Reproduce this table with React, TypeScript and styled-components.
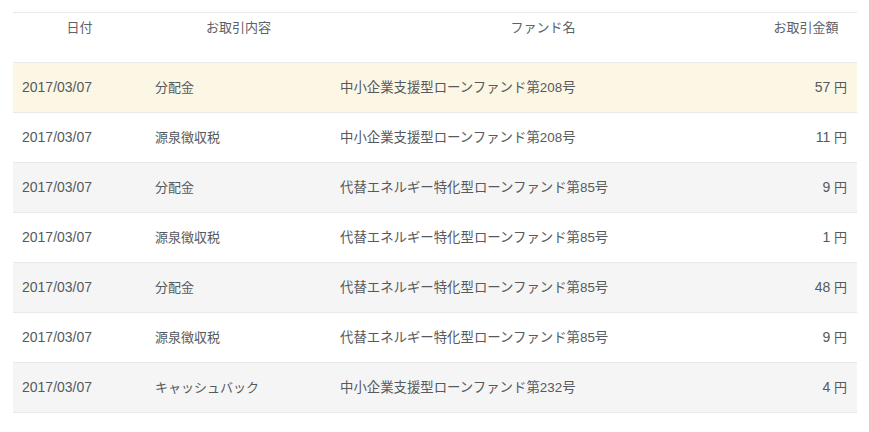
import React from 'react';
import styled, { createGlobalStyle } from 'styled-components';

interface Trade {
  date: string;
  kind: string;
  fund: string;
  amount: number;
}

const trades: Trade[] = [
  { date: '2017/03/07', kind: '分配金', fund: '中小企業支援型ローンファンド第208号', amount: 57 },
  { date: '2017/03/07', kind: '源泉徴収税', fund: '中小企業支援型ローンファンド第208号', amount: 11 },
  { date: '2017/03/07', kind: '分配金', fund: '代替エネルギー特化型ローンファンド第85号', amount: 9 },
  { date: '2017/03/07', kind: '源泉徴収税', fund: '代替エネルギー特化型ローンファンド第85号', amount: 1 },
  { date: '2017/03/07', kind: '分配金', fund: '代替エネルギー特化型ローンファンド第85号', amount: 48 },
  { date: '2017/03/07', kind: '源泉徴収税', fund: '代替エネルギー特化型ローンファンド第85号', amount: 9 },
  { date: '2017/03/07', kind: 'キャッシュバック', fund: '中小企業支援型ローンファンド第232号', amount: 4 },
];

const GlobalStyle = createGlobalStyle`
  body {
    margin: 0;
    background: #ffffff;
    font-family: "Liberation Sans", "Noto Sans CJK JP", sans-serif;
    color: #555a5e;
  }
`;

export default function App() {
  return (
    <>
      <GlobalStyle />
      <Wrapper>
        <Table>
          <colgroup>
            <col style={{ width: 133 }} />
            <col style={{ width: 185 }} />
            <col style={{ width: 424 }} />
            <col style={{ width: 102 }} />
          </colgroup>
          <thead>
            <tr>
              <HeadCell>日付</HeadCell>
              <HeadCell>お取引内容</HeadCell>
              <HeadCell>ファンド名</HeadCell>
              <HeadCell>お取引金額</HeadCell>
            </tr>
          </thead>
          <tbody>
            {trades.map((t, i) => (
              <Row key={i} $index={i}>
                <Cell>
                  <Num>{t.date}</Num>
                </Cell>
                <Cell>{t.kind}</Cell>
                <Cell $size={13.4}>{t.fund}</Cell>
                <Cell $right>
                  <Num>{t.amount}</Num> 円
                </Cell>
              </Row>
            ))}
          </tbody>
        </Table>
      </Wrapper>
    </>
  );
}

const Wrapper = styled.div`
  padding: 12px 12px 0 13px;
`;

const Table = styled.table`
  width: 844px;
  border-collapse: collapse;
  table-layout: fixed;
  border-top: 1px solid #e9e9e9;
  font-size: 13px;
`;

const HeadCell = styled.th`
  height: 44px;
  padding: 5px 9px 0;
  vertical-align: top;
  text-align: center;
  font-weight: normal;
  color: #5d6265;
  line-height: 20px;
  border-bottom: 1px solid #e9e9e9;
`;

const Row = styled.tr<{ $index: number }>`
  background: ${({ $index }) =>
    $index === 0 ? '#fcf6e4' : $index % 2 === 0 ? '#f5f5f5' : '#ffffff'};
  border-bottom: 1px solid #e9e9e9;
`;

const Cell = styled.td<{ $right?: boolean; $size?: number }>`
  height: 49px;
  padding: 0 10px 0 9px;
  text-align: ${({ $right }) => ($right ? 'right' : 'left')};
  font-size: ${({ $size }) => ($size ? `${$size}px` : 'inherit')};
  line-height: 20px;
  white-space: nowrap;
`;

const Num = styled.span`
  font-size: 14px;
`;
